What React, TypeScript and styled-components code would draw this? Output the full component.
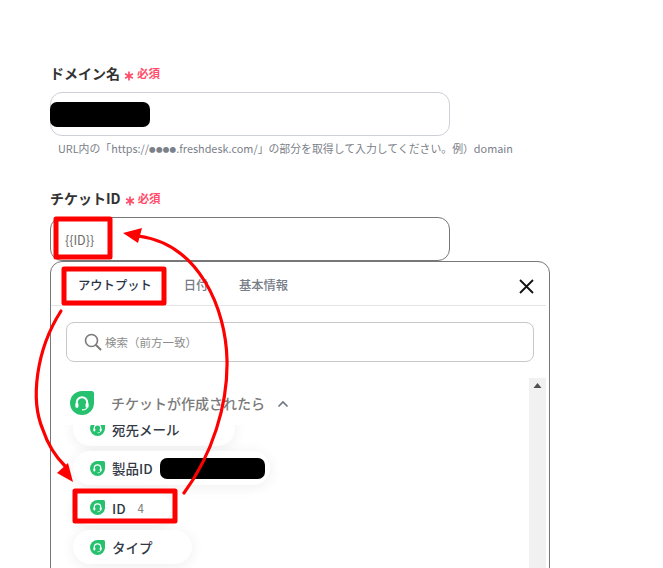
import * as React from 'react';
import styled, { createGlobalStyle } from 'styled-components';

const GlobalStyle = createGlobalStyle`
    html, body {
        margin: 0;
        padding: 0;
        background: #fff;
    }
    body {
        font-family: "Noto Sans CJK JP", "Noto Sans", sans-serif;
    }
`;

const Page = styled.div`
    position: relative;
    width: 663px;
    height: 568px;
    overflow: hidden;
    padding: 64px 0 0 50px;
    box-sizing: border-box;
    background: #fff;
`;

const Field = styled.div`
    width: 400px;
    margin-bottom: 32px;
`;

const Label = styled.div`
    display: flex;
    align-items: center;
    height: 19px;
    margin-bottom: 9px;
    font-size: 14px;
    font-weight: 700;
    line-height: 19px;
    color: #333;
`;

const RequiredMark = styled.svg`
    flex: none;
    margin: 5px 0 0 4px;
`;

const Required = styled.span`
    margin-left: 3px;
    font-size: 11.5px;
    font-weight: 700;
    color: #ff4d6a;
`;

const Input = styled.div<{ $dark?: boolean }>`
    display: flex;
    align-items: center;
    height: 44px;
    padding-left: ${(p) => (p.$dark ? 14 : 0)}px;
    box-sizing: border-box;
    border: 1px solid ${(p) => (p.$dark ? '#777' : '#cdd0d8')};
    border-radius: 12px;
    font-size: 12.5px;
    color: #6b6b6b;
`;

const Redaction = styled.span<{ $width: number; $height: number }>`
    display: block;
    flex: none;
    width: ${(p) => p.$width}px;
    height: ${(p) => p.$height}px;
    border-radius: 7px;
    background: #000;
`;

const DomainRedaction = styled(Redaction)`
    margin-left: -1px;
`;

const Help = styled.div`
    margin: 5px 0 0 8px;
    font-size: 10.87px;
    line-height: 15px;
    white-space: nowrap;
    color: #7b8089;
`;

const Dots = styled.span`
    font-size: 6.5px;
    letter-spacing: 0.3px;
    vertical-align: 1px;
`;

const Panel = styled.div`
    width: 500px;
    height: 340px;
    margin-top: -32px;
    box-sizing: border-box;
    border: 1px solid #777;
    border-radius: 12px;
    background: #fff;
    padding: 0 3px 0 0;
`;

const Tabs = styled.div`
    display: flex;
    align-items: center;
    height: 40px;
    padding: 3px 0 0 27px;
    border-bottom: 1px solid #e4e4e4;
`;

const Tab = styled.div<{ $active?: boolean }>`
    margin-right: ${(p) => (p.$active ? 32 : 30.5)}px;
    font-size: 12.3px;
    font-weight: 500;
    color: ${(p) => (p.$active ? '#283246' : '#777d88')};
`;

const CloseButton = styled.div`
    display: flex;
    margin: 3px 12px 0 auto;
`;

const SearchBox = styled.div`
    display: flex;
    align-items: center;
    gap: 3px;
    width: 468px;
    height: 40px;
    margin: 16px 0 0 15px;
    padding-left: 17px;
    box-sizing: border-box;
    border: 1px solid #c8c8c8;
    border-radius: 8px;
    font-size: 11.5px;
    color: #8d8d8d;
`;

const Body = styled.div`
    display: flex;
    justify-content: space-between;
    margin-top: 16px;
    height: 200px;
`;

const Outputs = styled.div`
    flex: 1;
    padding: 12px 0 0 19px;
`;

const GroupTitle = styled.div`
    display: flex;
    align-items: center;
    height: 25px;
    font-size: 14px;
    font-weight: 500;
    color: #7a7a7a;
`;

const GroupName = styled.span`
    margin-left: 17px;
`;

const Caret = styled.span`
    display: flex;
    margin: 3px 0 0 12px;
`;

const ChipViewport = styled.div`
    height: 150px;
    margin: 10px 0 0 -19px;
    padding: 0 30px 0 22px;
    overflow: hidden;
`;

const ChipList = styled.div`
    display: flex;
    flex-direction: column;
    align-items: flex-start;
    gap: 5.5px;
    margin-top: -13.5px;
`;

const Chip = styled.div<{ $width: number }>`
    display: flex;
    align-items: center;
    gap: 7px;
    width: ${(p) => p.$width}px;
    height: 34px;
    padding-left: 17px;
    box-sizing: border-box;
    border-radius: 17px;
    background: #fff;
    box-shadow: 0 2px 14px rgba(0, 0, 0, 0.07);
    font-size: 13.5px;
    font-weight: 500;
    color: #333a46;
`;

const ChipValue = styled.span`
    margin-left: 5px;
    font-size: 11.5px;
    font-weight: 400;
    color: #777;
`;

const Scrollbar = styled.div`
    display: flex;
    justify-content: center;
    flex: none;
    width: 17px;
    padding-top: 5px;
    box-sizing: border-box;
    background: #f1f1f1;
`;

const Annotation = styled.svg`
    position: absolute;
    left: 0;
    top: 0;
    pointer-events: none;
`;

const Star: React.FC = () => (
    <RequiredMark width="10" height="10" viewBox="0 0 10 10">
        <path d="M5 0.5V9.5M1.1 2.75L8.9 7.25M8.9 2.75L1.1 7.25" stroke="#ff4d6a" strokeWidth="1.7" />
    </RequiredMark>
);

const FreshdeskIcon: React.FC<{ size: number }> = ({ size }) => (
    <svg width={size} height={size} viewBox="0 0 24 24" style={{ flex: 'none' }}>
        <path d="M12 0H21.5A2.5 2.5 0 0 1 24 2.5V12A12 12 0 0 1 0 12A12 12 0 0 1 12 0Z" fill="#25c16f" />
        <path d="M6.8 13V11.5A5.2 5.2 0 0 1 17.2 11.5V13" fill="none" stroke="#fff" strokeWidth="2" />
        <rect x="5.4" y="12" width="3" height="4.8" rx="1.2" fill="#fff" />
        <rect x="15.6" y="12" width="3" height="4.8" rx="1.2" fill="#fff" />
        <path d="M17 16.5C16.8 18 15 18.8 12 18.8" fill="none" stroke="#fff" strokeWidth="1.2" />
    </svg>
);

export default function App() {
    return (
        <Page>
            <GlobalStyle />
            <Field>
                <Label>
                    ドメイン名
                    <Star />
                    <Required>必須</Required>
                </Label>
                <Input>
                    <DomainRedaction $width={100} $height={25} />
                </Input>
                <Help>
                    URL内の「https://<Dots>●●●●</Dots>.freshdesk.com/」の部分を取得して入力してください。例）domain
                </Help>
            </Field>
            <Field>
                <Label>
                    チケットID
                    <Star />
                    <Required>必須</Required>
                </Label>
                <Input $dark>{'{{ID}}'}</Input>
            </Field>
            <Panel>
                <Tabs>
                    <Tab $active>アウトプット</Tab>
                    <Tab>日付</Tab>
                    <Tab>基本情報</Tab>
                    <CloseButton>
                        <svg width="15" height="15" viewBox="0 0 15 15">
                            <path d="M1 1L14 14M14 1L1 14" stroke="#111" strokeWidth="1.8" />
                        </svg>
                    </CloseButton>
                </Tabs>
                <SearchBox>
                    <svg width="18" height="18" viewBox="0 0 18 18">
                        <circle cx="7.5" cy="7.5" r="6" fill="none" stroke="#7a7a7a" strokeWidth="1.6" />
                        <path d="M12 12L16.5 16.5" stroke="#7a7a7a" strokeWidth="2" strokeLinecap="round" />
                    </svg>
                    検索（前方一致）
                </SearchBox>
                <Body>
                    <Outputs>
                        <GroupTitle>
                            <FreshdeskIcon size={24} />
                            <GroupName>チケットが作成されたら</GroupName>
                            <Caret>
                                <svg width="12" height="8" viewBox="0 0 12 8">
                                    <path d="M1.5 6.5L6 2L10.5 6.5" fill="none" stroke="#6f7580" strokeWidth="1.6" />
                                </svg>
                            </Caret>
                        </GroupTitle>
                        <ChipViewport>
                            <ChipList>
                                <Chip $width={162}>
                                    <FreshdeskIcon size={15} />
                                    宛先メール
                                </Chip>
                                <Chip $width={197}>
                                    <FreshdeskIcon size={15} />
                                    製品ID
                                    <Redaction $width={105} $height={21} />
                                </Chip>
                                <Chip $width={98}>
                                    <FreshdeskIcon size={15} />
                                    ID<ChipValue>4</ChipValue>
                                </Chip>
                                <Chip $width={119}>
                                    <FreshdeskIcon size={15} />
                                    タイプ
                                </Chip>
                            </ChipList>
                        </ChipViewport>
                    </Outputs>
                    <Scrollbar>
                        <svg width="9" height="5" viewBox="0 0 9 5">
                            <path d="M4.5 0L8.5 5H0.5Z" fill="#505050" />
                        </svg>
                    </Scrollbar>
                </Body>
            </Panel>
            <Annotation width="663" height="568" viewBox="0 0 663 568">
                <g fill="none" stroke="#ff0000" strokeWidth="5" strokeLinejoin="round">
                    <rect x="56" y="219" width="54" height="38" />
                    <rect x="64" y="269" width="100" height="34" />
                    <rect x="75" y="491" width="100" height="30" />
                </g>
                <g fill="none" stroke="#ff0000" strokeWidth="3.2" strokeLinecap="round">
                    <path d="M61 311C36 350 30 400 43 430C48 445 55 456 65 466" />
                    <path d="M184 493C212 455 228 405 227 360C226 310 200 244 138 236" />
                </g>
                <path d="M73 482L57 473L68 463Z" fill="#ff0000" />
                <path d="M123 233L142 228L138 243Z" fill="#ff0000" />
            </Annotation>
        </Page>
    );
}
